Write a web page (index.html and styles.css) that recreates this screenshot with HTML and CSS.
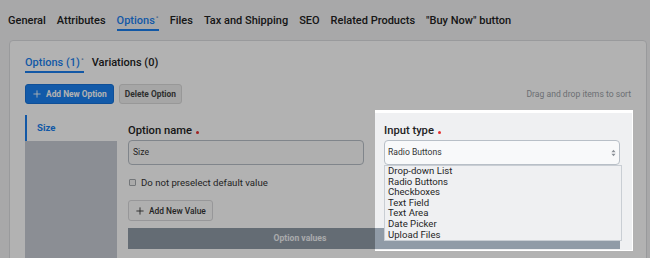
FILE: index.html
```html
<!DOCTYPE html>
<html lang="en">
<head>
<meta charset="utf-8">
<title>Product options</title>
<link rel="stylesheet" href="styles.css">
</head>
<body>
<nav class="tabs">
  <span class="tab">General</span>
  <span class="tab">Attributes</span>
  <span class="tab active">Options<span class="mark">•</span></span>
  <span class="tab">Files</span>
  <span class="tab">Tax and Shipping</span>
  <span class="tab">SEO</span>
  <span class="tab">Related Products</span>
  <span class="tab">"Buy Now" button</span>
</nav>
<section class="card">
  <div class="spot-bg"></div>
  <div class="subtabs">
    <span class="subtab active">Options (1)<span class="mark">•</span></span>
    <span class="subtab">Variations (0)</span>
  </div>
  <div class="toolbar">
    <button class="btn btn-primary"><svg class="plus" viewBox="0 0 10 10"><path d="M5 0.5V9.5M0.5 5H9.5"/></svg>Add New Option</button>
    <button class="btn btn-muted">Delete Option</button>
    <span class="hint">Drag and drop items to sort</span>
  </div>
  <div class="options">
    <aside class="option-list">
      <div class="option-item active">Size</div>
    </aside>
    <div class="option-body">
      <div class="fields">
        <div class="field">
          <div class="label">Option name <span class="req"></span></div>
          <div class="input">Size</div>
          <label class="check"><span class="box"></span>Do not preselect default value</label>
          <button class="btn btn-light"><svg class="plus" viewBox="0 0 10 10"><path d="M5 0.5V9.5M0.5 5H9.5"/></svg>Add New Value</button>
        </div>
        <div class="field">
          <div class="label">Input type <span class="req"></span></div>
          <div class="select">Radio Buttons<svg class="arrows" viewBox="0 0 6 9"><path d="M3 0.5L5.5 3.5H0.5Z M3 8.5L5.5 5.5H0.5Z"/></svg></div>
          <ul class="dropdown">
            <li>Drop-down List</li>
            <li>Radio Buttons</li>
            <li>Checkboxes</li>
            <li>Text Field</li>
            <li>Text Area</li>
            <li>Date Picker</li>
            <li>Upload Files</li>
          </ul>
        </div>
      </div>
      <div class="values-head">
        <span class="col-main">Option values</span>
        <span class="col-value">Value</span>
      </div>
    </div>
  </div>
</section>
<div class="spotlight"></div>
</body>
</html>
```
FILE: styles.css
```css
html, body {
  margin: 0;
  padding: 0;
}
body {
  width: 650px;
  height: 258px;
  overflow: hidden;
  background: #f1f1f3;
  font-family: Roboto, "Liberation Sans", Arial, sans-serif;
  color: #262626;
  position: relative;
}

.tabs {
  display: flex;
  gap: 11px;
  height: 40px;
  box-sizing: border-box;
  padding: 14px 0 0 8px;
}
.tab {
  font-size: 11px;
  font-weight: 500;
  line-height: 14px;
  height: 14px;
  padding-bottom: 1px;
  border-bottom: 2px solid transparent;
  white-space: nowrap;
  color: #222;
}
.tab.active {
  color: #1a7fee;
  border-bottom-color: #1a7fee;
}
.mark {
  font-size: 8px;
  line-height: 0;
  position: relative;
  top: -4px;
  color: #7f9fcc;
  margin-left: 1px;
}

.card {
  position: relative;
  margin-left: 9px;
  width: 638px;
  height: 260px;
  box-sizing: border-box;
  background: #fff;
  border: 1px solid #dcdde0;
  border-radius: 4px;
  padding: 15px 15px 0 15px;
}
.spot-bg {
  position: absolute;
  left: 365px;
  top: 72px;
  width: 257px;
  height: 137px;
  background: #eff0f2;
  z-index: 0;
}

.subtabs {
  display: flex;
  gap: 8px;
  height: 18px;
}
.subtab {
  font-size: 11px;
  font-weight: 500;
  line-height: 14px;
  height: 14px;
  padding-bottom: 1px;
  border-bottom: 2px solid transparent;
  color: #222;
  white-space: nowrap;
}
.subtab.active {
  color: #1a7fee;
  border-bottom-color: #1a7fee;
}

.toolbar {
  display: flex;
  align-items: center;
  gap: 5px;
  height: 20px;
  margin-top: 10px;
}
.btn {
  display: inline-flex;
  align-items: center;
  justify-content: center;
  gap: 5px;
  box-sizing: border-box;
  font-family: Roboto, "Liberation Sans", Arial, sans-serif;
  font-size: 8.4px;
  font-weight: 700;
  border-radius: 3px;
  padding: 0 6px;
  white-space: nowrap;
  cursor: pointer;
}
.btn-primary {
  height: 20px;
  padding: 0 6px 0 7px;
  background: #1b82f2;
  border: 1px solid #1672d8;
  color: #fff;
}
.btn-muted {
  height: 20px;
  padding: 0 5px;
  background: #eeeeee;
  border: 1px solid #dadada;
  color: #444;
}
.btn-light {
  height: 21px;
  margin-top: 11px;
  padding: 0 6px 0 7px;
  background: #fbfbfb;
  border: 1px solid #d9d9db;
  color: #333;
  font-weight: 500;
  font-size: 8.4px;
}
.plus {
  width: 8px;
  height: 8px;
  flex: none;
}
.plus path {
  stroke: currentColor;
  stroke-width: 1.1;
  fill: none;
}
.hint {
  margin-left: auto;
  font-size: 8.6px;
  color: #9aa0a6;
}

.options {
  display: flex;
  gap: 11px;
  margin-top: 11px;
}
.option-list {
  width: 92px;
  height: 160px;
  background: #c7ccd5;
  flex: none;
}
.option-item {
  height: 26px;
  box-sizing: border-box;
  background: #fff;
  border-left: 2px solid #1a7fee;
  padding-left: 10px;
  font-size: 9.6px;
  font-weight: 700;
  line-height: 26px;
  color: #1a7fee;
}
.option-body {
  position: relative;
  z-index: 1;
  width: 492px;
}
.fields {
  display: grid;
  grid-template-columns: 236px 236px;
  gap: 20px;
  padding-top: 8px;
}
.field {
  position: relative;
  display: flex;
  flex-direction: column;
  align-items: flex-start;
}
.label {
  font-size: 11.2px;
  font-weight: 500;
  line-height: 16px;
  height: 16px;
  color: #222;
  display: flex;
  align-items: center;
  gap: 4px;
}
.req {
  display: inline-block;
  width: 3px;
  height: 3px;
  border-radius: 50%;
  background: #e53030;
  margin-top: 2px;
}
.input, .select {
  margin-top: 1px;
  width: 236px;
  height: 25px;
  box-sizing: border-box;
  border: 1px solid #b8bfc7;
  border-radius: 4px;
  background: #fbfbfb;
  font-size: 8.6px;
  line-height: 23px;
  padding: 0 4px;
  color: #333;
}
.select {
  background: #f8f9fa;
  display: flex;
  align-items: center;
  justify-content: space-between;
  padding: 0 3px 0 3px;
}
.arrows {
  width: 5px;
  height: 8px;
}
.arrows path {
  fill: #8a9097;
}
.check {
  display: flex;
  align-items: center;
  gap: 5px;
  margin-top: 10px;
  height: 14px;
  font-size: 9.6px;
  color: #333;
  padding-left: 1px;
  white-space: nowrap;
}
.box {
  width: 7px;
  height: 7px;
  box-sizing: border-box;
  border: 1px solid #a5a9ae;
  border-radius: 1px;
  background: #f4f4f4;
}
.dropdown {
  position: absolute;
  left: 0;
  top: 42px;
  width: 238px;
  margin: 0;
  padding: 0 0 0 3px;
  box-sizing: border-box;
  list-style: none;
  background: #eff0f2;
  border: 1px solid #c9ced4;
  font-size: 9.6px;
  line-height: 10.6px;
  color: #262626;
  z-index: 2;
}
.values-head {
  display: grid;
  grid-template-columns: 344px 1fr;
  height: 21px;
  margin-top: 7px;
  background: #909ba7;
  color: #f2f4f6;
  font-size: 8.6px;
  font-weight: 700;
  line-height: 21px;
}
.col-main {
  text-align: center;
}
.col-value {
  text-align: right;
  padding-right: 30px;
}

.spotlight {
  position: absolute;
  left: 375px;
  top: 110px;
  width: 258px;
  height: 141px;
  box-shadow: 0 0 0 1200px rgba(0, 0, 0, 0.3);
  pointer-events: none;
  z-index: 10;
}
```
